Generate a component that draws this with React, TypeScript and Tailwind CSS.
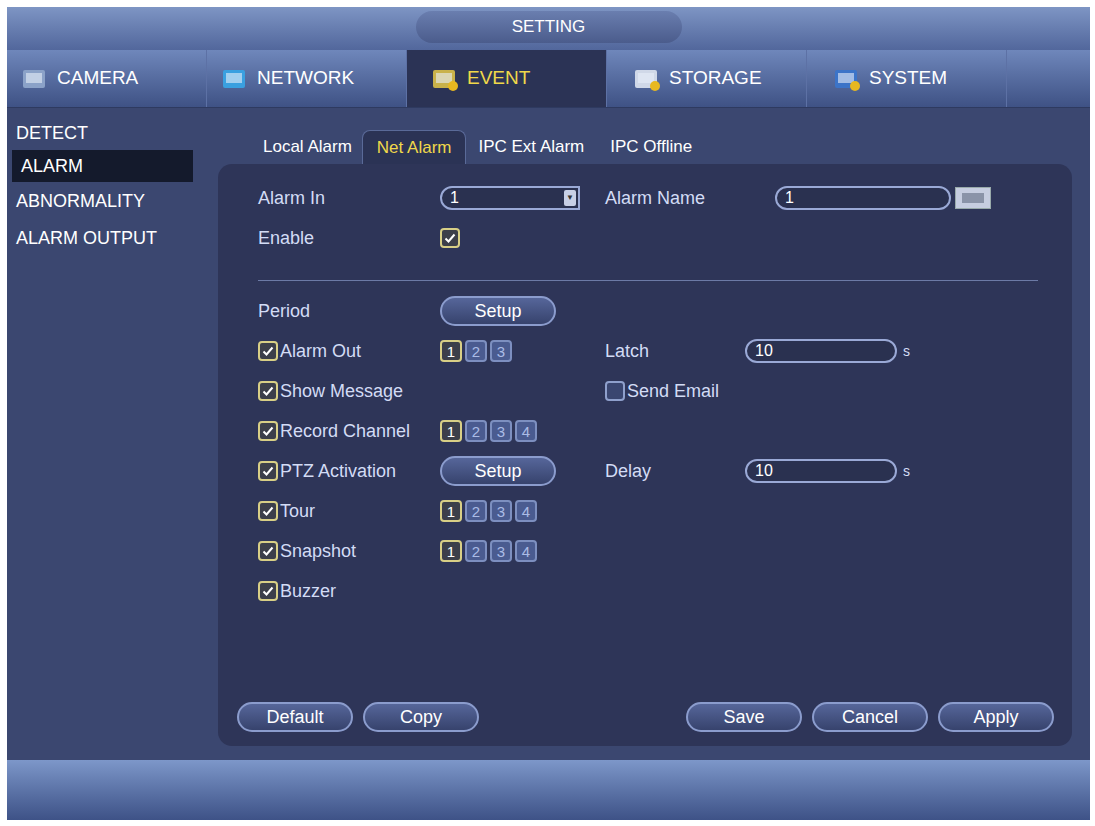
import React from "react";

const F = { fontFamily: '"Liberation Sans", Arial, sans-serif' };

const Chk = ({ on = true }: { on?: boolean }) => (
  <span className={`inline-flex w-[20px] h-[20px] rounded-[4px] border-2 items-center justify-center mr-[2px] ${on ? "border-[#d8cf86] bg-[#3c3f4a]" : "border-[#8fa0cc] bg-[#3a4670]"}`}>
    {on && (
      <svg width="14" height="14" viewBox="0 0 14 14"><path d="M2.5 7.5 L5.5 10.5 L11.5 3.5" stroke="#fff" strokeWidth="2" fill="none" /></svg>
    )}
  </span>
);

const Nums = ({ n }: { n: number }) => (
  <div className="flex gap-[3px]">
    {Array.from({ length: n }, (_, i) => (
      <span key={i} className={`w-[22px] h-[22px] rounded-[4px] border-2 flex items-center justify-center text-[15px] leading-none ${i === 0 ? "border-[#d8cf86] bg-[#3c3f4a] text-white" : "border-[#7d8fc0] bg-[#4a5b90] text-[#aabbe6]"}`}>{i + 1}</span>
    ))}
  </div>
);

const Btn = ({ t, w = "w-[116px]" }: { t: string; w?: string }) => (
  <div className={`${w} h-[30px] rounded-full border-2 border-[#8b9ccd] bg-gradient-to-b from-[#56669a] to-[#37436d] flex items-center justify-center text-white text-[18px]`}>{t}</div>
);

const Input = ({ v, w }: { v: string; w: string }) => (
  <div className={`${w} h-[24px] rounded-full border-2 border-[#9aa9d6] bg-[#2a3150] text-white text-[16px] pl-[8px] flex items-center`}>{v}</div>
);

const Row = ({ children }: { children: React.ReactNode }) => (
  <div className="h-[40px] flex items-center text-[#d3dcf5] text-[18px]">{children}</div>
);

export default function App() {
  return (
    <div style={F} className="w-[1095px] h-[826px] bg-white p-[7px] pr-[5px] pb-[6px]">
      <div className="w-full h-full flex flex-col bg-[#3b4770]">
        <div className="h-[43px] bg-gradient-to-b from-[#7e95c4] to-[#52679c] flex items-start justify-center">
          <div className="w-[266px] h-[32px] mt-[4px] rounded-full bg-gradient-to-b from-[#6a7eaf] to-[#4b5c8c] flex items-center justify-center text-white text-[17px]">SETTING</div>
        </div>
        <div className="h-[58px] flex bg-gradient-to-b from-[#6f87bb] to-[#3f5285] border-b border-[#2e3a60]">
          {[
            ["CAMERA", "#8ba2c8"], ["NETWORK", "#3aa0e0"], ["EVENT", "#c9b24a"], ["STORAGE", "#d0d8e8"], ["SYSTEM", "#3c74c8"],
          ].map(([t, c], i) => (
            <div key={t} className={`w-[200px] flex items-center px-[14px] gap-[6px] text-[19px] border-r border-[#5d71a5] ${i === 2 ? "bg-[#2b3355] text-[#f0d84a] pl-[24px]" : "text-white"} ${i === 3 || i === 4 ? "pl-[26px]" : ""}`}>
              <svg width="30" height="26" viewBox="0 0 30 26">
                <rect x="2" y="4" width="22" height="18" rx="2" fill={c} />
                <rect x="5" y="7" width="16" height="10" fill="#e8eef8" opacity="0.6" />
                {i >= 2 && <circle cx="22" cy="20" r="5" fill="#e8b820" />}
              </svg>
              <span>{t}</span>
            </div>
          ))}
        </div>
        <div className="flex-1 flex">
          <div className="w-[198px] pt-[8px] text-white text-[18px]">
            <div className="h-[34px] pl-[9px] flex items-center">DETECT</div>
            <div className="h-[32px] pl-[9px] ml-[5px] mr-[12px] flex items-center bg-[#141a2c]">ALARM</div>
            <div className="h-[38px] pl-[9px] flex items-center">ABNORMALITY</div>
            <div className="h-[36px] pl-[9px] flex items-center">ALARM OUTPUT</div>
          </div>
          <div className="flex-1 flex flex-col pr-[18px] pb-[14px]">
            <div className="h-[56px] flex items-end pl-[48px] text-white text-[17px]">
              <div className="h-[34px] px-[10px] flex items-center">Local Alarm</div>
              <div className="h-[34px] px-[14px] flex items-center bg-[#2b3355] rounded-t-[8px] text-[#f0d84a] border border-[#5a6a98] border-b-0">Net Alarm</div>
              <div className="h-[34px] px-[12px] flex items-center">IPC Ext Alarm</div>
              <div className="h-[34px] px-[14px] flex items-center">IPC Offline</div>
            </div>
            <div className="flex-1 ml-[13px] rounded-[14px] bg-[#2e3558] pl-[40px] pr-[36px] pt-[14px] pb-[14px] flex flex-col">
              <Row>
                <span className="w-[182px]">Alarm In</span>
                <div className="w-[140px] h-[24px] rounded-l-full border-2 border-[#9aa9d6] bg-[#2a3150] flex items-center justify-between text-white text-[16px] pl-[8px]">
                  1<span className="w-[12px] h-[16px] bg-[#c7cfe6] rounded-[2px] mr-[2px] flex items-center justify-center text-[#333] text-[8px]">▼</span>
                </div>
                <span className="ml-[25px] w-[170px]">Alarm Name</span>
                <Input v="1" w="w-[176px]" />
                <span className="ml-[4px] w-[36px] h-[22px] bg-[#c6cde0] border border-[#9aa] flex items-center justify-center"><span className="w-[22px] h-[10px] bg-[#8a93a8]" /></span>
              </Row>
              <Row><span className="w-[182px]">Enable</span><Chk /></Row>
              <div className="h-[1px] bg-[#6c7aa6] mt-[22px] mb-[10px] mr-[-2px]" />
              <Row><span className="w-[182px]">Period</span><Btn t="Setup" /></Row>
              <Row><span className="w-[182px] flex items-center"><Chk />Alarm Out</span><span className="w-[165px]"><Nums n={3} /></span><span className="w-[140px]">Latch</span><Input v="10" w="w-[152px]" /><span className="ml-[6px] text-[14px]">s</span></Row>
              <Row><span className="w-[347px] flex items-center"><Chk />Show Message</span><span className="flex items-center"><Chk on={false} />Send Email</span></Row>
              <Row><span className="w-[182px] flex items-center whitespace-nowrap"><Chk />Record Channel</span><Nums n={4} /></Row>
              <Row><span className="w-[182px] flex items-center"><Chk />PTZ Activation</span><span className="w-[165px]"><Btn t="Setup" /></span><span className="w-[140px]">Delay</span><Input v="10" w="w-[152px]" /><span className="ml-[6px] text-[14px]">s</span></Row>
              <Row><span className="w-[182px] flex items-center"><Chk />Tour</span><Nums n={4} /></Row>
              <Row><span className="w-[182px] flex items-center"><Chk />Snapshot</span><Nums n={4} /></Row>
              <Row><span className="w-[182px] flex items-center"><Chk />Buzzer</span></Row>
              <div className="flex-1" />
              <div className="flex gap-[10px] -ml-[21px] -mr-[18px] items-center">
                <Btn t="Default" /><Btn t="Copy" />
                <div className="flex-1" />
                <Btn t="Save" /><Btn t="Cancel" /><Btn t="Apply" />
              </div>
            </div>
          </div>
        </div>
        <div className="h-[60px] bg-gradient-to-b from-[#7d97c9] to-[#3e5287]" />
      </div>
    </div>
  );
}
